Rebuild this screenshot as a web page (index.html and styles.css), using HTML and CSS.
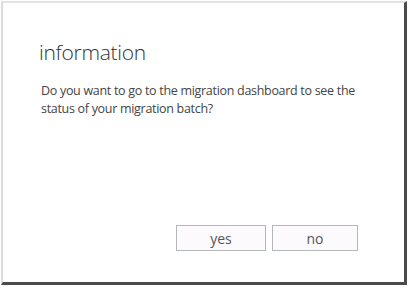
FILE: index.html
```html
<!DOCTYPE html>
<html lang="en">
<head>
    <meta charset="UTF-8">
    <title>information</title>
    <link rel="stylesheet" href="styles.css">
</head>
<body>
    <div class="dialog">
        <h2 class="title">information</h2>
        <p class="message">Do you want to go to the migration dashboard to see the status of your migration batch?</p>
        <div class="actions">
            <button class="btn">yes</button>
            <button class="btn">no</button>
        </div>
    </div>
</body>
</html>
```
FILE: styles.css
```css
body {
    margin: 0;
    background: #fff;
    font-family: "Open Sans", "Noto Sans", sans-serif;
}
.dialog {
    margin: 1px 0 0 1px;
    width: 406px;
    height: 284px;
    box-sizing: border-box;
    background: #fff;
    border-left: 2px solid #dcdcdc;
    border-top: 2px solid #e2e2e2;
    border-right: 3px solid #4a4a4a;
    border-bottom: 3px solid #4a4a4a;
    display: flex;
    flex-direction: column;
    padding: 34px 46px 0 36px;
}
.title {
    margin: 0;
    font-weight: 300;
    font-size: 21px;
    letter-spacing: -0.3px;
    line-height: 30px;
    color: #333;
}
.message {
    margin: 15px 0 0 2px;
    font-size: 12.5px;
    letter-spacing: -0.3px;
    line-height: 18px;
    color: #444;
}
.actions {
    margin-top: auto;
    margin-bottom: 31px;
    display: flex;
    justify-content: flex-end;
    gap: 6px;
}
.btn {
    width: 90px;
    height: 26px;
    border: 1px solid #b4b8bb;
    background: #fdfafd;
    color: #555;
    font-family: "Open Sans", "Noto Sans", sans-serif;
    font-size: 14px;
    padding: 0;
}
.btn + .btn {
    width: 86px;
}
```
